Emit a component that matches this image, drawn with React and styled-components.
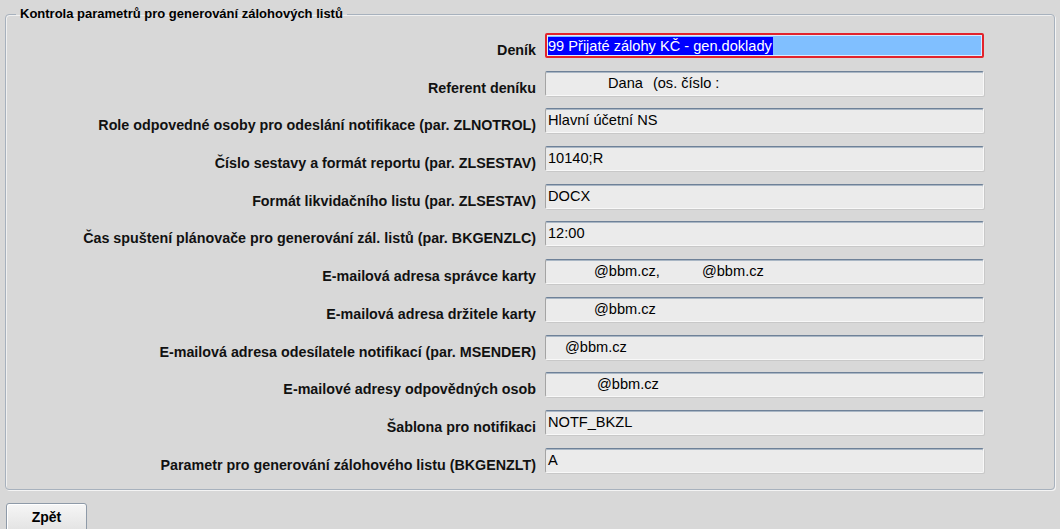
import React from "react";
import styled, { createGlobalStyle } from "styled-components";

const GlobalStyle = createGlobalStyle`
  html, body {
    margin: 0;
    padding: 0;
    background: #d8d8d8;
  }
  body {
    font-family: "Liberation Sans", Arial, sans-serif;
    font-size: 13px;
    color: #000;
  }
`;

const rows = [
  { label: "Deník", selected: true, parts: [{ text: "99 Přijaté zálohy KČ - gen.doklady" }] },
  { label: "Referent deníku", parts: [{ text: "Dana", indent: 60 }, { text: "(os. číslo :", indent: 10 }] },
  { label: "Role odpovedné osoby pro odeslání notifikace (par. ZLNOTROL)", parts: [{ text: "Hlavní účetní NS" }] },
  { label: "Číslo sestavy a formát reportu (par. ZLSESTAV)", parts: [{ text: "10140;R" }] },
  { label: "Formát likvidačního listu (par. ZLSESTAV)", parts: [{ text: "DOCX" }] },
  { label: "Čas spuštení plánovače pro generování zál. listů (par. BKGENZLC)", parts: [{ text: "12:00" }] },
  { label: "E-mailová adresa správce karty", parts: [{ text: "@bbm.cz,", indent: 46 }, { text: "@bbm.cz", indent: 42 }] },
  { label: "E-mailová adresa držitele karty", parts: [{ text: "@bbm.cz", indent: 46 }] },
  { label: "E-mailová adresa odesílatele notifikací (par. MSENDER)", parts: [{ text: "@bbm.cz", indent: 17 }] },
  { label: "E-mailové adresy odpovědných osob", parts: [{ text: "@bbm.cz", indent: 49 }] },
  { label: "Šablona pro notifikaci", parts: [{ text: "NOTF_BKZL" }] },
  { label: "Parametr pro generování zálohového listu (BKGENZLT)", parts: [{ text: "A" }] },
];

export default function App() {
  return (
    <Page>
      <GlobalStyle />
      <Panel>
        <Legend>Kontrola parametrů pro generování zálohových listů</Legend>
        <Form>
          {rows.map((row, i) => (
            <React.Fragment key={i}>
              <Label>{row.label}</Label>
              <Field selected={row.selected}>
                {row.parts.map((p, j) =>
                  row.selected ? (
                    <Highlight key={j}>{p.text}</Highlight>
                  ) : (
                    <Value key={j} indent={p.indent || 0}>{p.text}</Value>
                  )
                )}
              </Field>
            </React.Fragment>
          ))}
        </Form>
      </Panel>
      <Button>Zpět</Button>
    </Page>
  );
}

const Page = styled.div`
  padding: 6px 5px 0 5px;
  width: 1050px;
  height: 523px;
  overflow: hidden;
`;

const Panel = styled.fieldset`
  margin: 0;
  padding: 0 70px 16px 0;
  border: 1px solid #a7b1bd;
  border-radius: 4px;
  box-shadow: 1px 1px 0 #f4f4f4, inset 1px 1px 0 #f0f0f0;
  min-width: 0;
`;

const Legend = styled.legend`
  margin-left: 10px;
  padding: 0 4px;
  font-weight: bold;
  font-size: 13px;
  line-height: 16px;
  color: #000;
`;

const Form = styled.div`
  display: grid;
  grid-template-columns: 1fr 439px;
  grid-auto-rows: 25px;
  column-gap: 9px;
  row-gap: 12.7px;
  padding-top: 11px;
`;

const Label = styled.div`
  align-self: end;
  text-align: right;
  font-weight: bold;
  font-size: 14.3px;
  line-height: 17px;
  margin-bottom: -1px;
  white-space: nowrap;
  color: #111;
`;

const Field = styled.div`
  box-sizing: border-box;
  height: 25px;
  display: flex;
  align-items: center;
  padding-left: ${(p) => (p.selected ? "1px" : "2px")};
  white-space: nowrap;
  overflow: hidden;
  font-size: 14.6px;
  background: ${(p) => (p.selected ? "#80bfff" : "#ebebeb")};
  border: ${(p) => (p.selected ? "2px solid #e3232b" : "1px solid")};
  border-color: ${(p) =>
    p.selected ? "#e3232b" : "#6e8198 #f8f8f8 #f8f8f8 #a4a4a4"};
  box-shadow: ${(p) =>
    p.selected
      ? "inset 0 0 0 1px #d8ecff"
      : "inset 0 1px 0 #a9b6c4, 1px 1px 0 #c8c8c8"};
  border-radius: 2px;
`;

const Value = styled.span`
  margin-left: ${(p) => p.indent}px;
  color: #000;
  line-height: 17px;
`;

const Highlight = styled.span`
  background: #0000ff;
  color: #fff;
  line-height: 18px;
  padding-right: 1px;
`;

const Button = styled.button`
  margin-top: 13px;
  margin-left: 1px;
  width: 81px;
  height: 30px;
  font-family: "Liberation Sans", Arial, sans-serif;
  font-size: 14px;
  font-weight: bold;
  color: #000;
  background: linear-gradient(#f6f6f6, #e2e2e2);
  border: 1px solid #8e9aa8;
  border-radius: 3px;
  box-shadow: inset 1px 1px 0 #fff;
  padding: 0 0 2px 0;
`;
